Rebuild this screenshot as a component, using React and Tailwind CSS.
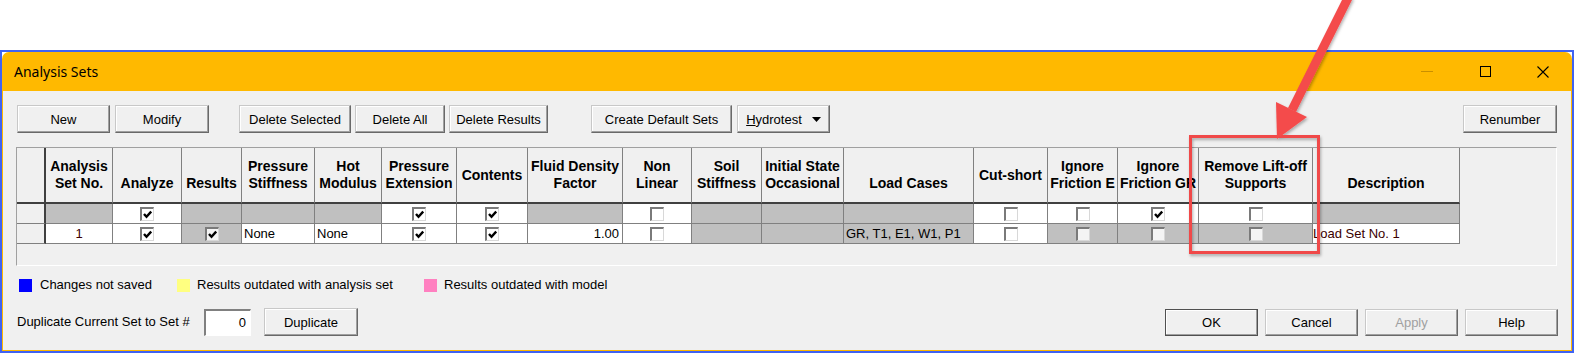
import React from 'react';

const BG = { g: 'bg-[#c0c0c0]', w: 'bg-white', h: 'bg-[#f0f0f0]' };

const COLS = [
  ['', ''],
  ['Analysis', 'Set No.'],
  ['', 'Analyze'],
  ['', 'Results'],
  ['Pressure', 'Stiffness'],
  ['Hot', 'Modulus'],
  ['Pressure', 'Extension'],
  ['Contents'],
  ['Fluid Density', 'Factor'],
  ['Non', 'Linear'],
  ['Soil', 'Stiffness'],
  ['Initial State', 'Occasional'],
  ['', 'Load Cases'],
  ['Cut-short'],
  ['Ignore', 'Friction E'],
  ['Ignore', 'Friction GR'],
  ['Remove Lift-off', 'Supports'],
  ['', 'Description'],
];

// bg, checkbox (true/false/undefined), text, align
const ROWS = [
  [
    { bg: 'h' }, { bg: 'g' }, { bg: 'w', cb: true }, { bg: 'g' }, { bg: 'g' }, { bg: 'g' },
    { bg: 'w', cb: true }, { bg: 'w', cb: true }, { bg: 'g' }, { bg: 'w', cb: false },
    { bg: 'g' }, { bg: 'g' }, { bg: 'g' }, { bg: 'w', cb: false }, { bg: 'w', cb: false },
    { bg: 'w', cb: true }, { bg: 'w', cb: false }, { bg: 'g' },
  ],
  [
    { bg: 'h' }, { bg: 'w', text: '1', al: 'c', red: true }, { bg: 'w', cb: true }, { bg: 'g', cb: true },
    { bg: 'w', text: 'None' }, { bg: 'w', text: 'None' }, { bg: 'w', cb: true }, { bg: 'w', cb: true },
    { bg: 'w', text: '1.00', al: 'r' }, { bg: 'w', cb: false }, { bg: 'g' }, { bg: 'g' },
    { bg: 'g', text: 'GR, T1, E1, W1, P1' }, { bg: 'w', cb: false }, { bg: 'g', cb: false },
    { bg: 'g', cb: false }, { bg: 'g', cb: false }, { bg: 'w', text: 'Load Set No. 1', red: true, tight: true },
  ],
];

const Check = () => (
  <svg width="9" height="9" viewBox="0 0 9 9" className="block">
    <path d="M1 4 L3.5 6.8 L8.2 1.5" fill="none" stroke="#000" strokeWidth="2.4" />
  </svg>
);

const Box = ({ on, dim }) => (
  <span
    className={`flex h-[14px] w-[14px] items-center justify-center border-t-2 border-l-2 border-t-[#7a7a7a] border-l-[#7a7a7a] border-b border-r border-b-[#d8d8d8] border-r-[#d8d8d8] ${dim ? 'bg-[#f4f4f4]' : 'bg-white'}`}
  >
    {on && <Check />}
  </span>
);

const Btn = ({ children, className = '', muted, def }) => (
  <button
    className={`flex items-center justify-center border bg-[#f0f0f0] text-[13px] leading-none shadow-[inset_-1px_-1px_0_#a0a0a0,inset_1px_1px_0_#ffffff] ${def ? 'border-[#505050]' : 'border-[#c8c8c8] border-r-[#696969] border-b-[#696969]'} ${muted ? 'text-[#a0a0a0]' : 'text-black'} ${className}`}
  >
    {children}
  </button>
);

export default function App() {
  return (
    <div className="relative h-[353px] w-[1574px] overflow-hidden bg-white font-['Liberation_Sans',Arial,sans-serif] text-black">
      <div className="pt-[50px]">
        <div className="h-[303px] w-[1574px] border-2 border-[#4063f2] bg-white">
          <div className="overflow-hidden rounded-t-[7px]">
            {/* title bar */}
            <div className="flex h-[39px] items-center bg-[#ffb900]">
              <span className="pl-[12px] font-['Noto_Sans',sans-serif] text-[14px]">Analysis Sets</span>
              <div className="ml-auto flex h-full">
                <div className="flex w-[58px] items-center justify-center">
                  <span className="block h-px w-[12px] bg-[#c98f00]" />
                </div>
                <div className="flex w-[58px] items-center justify-center">
                  <span className="block h-[11px] w-[11px] border border-black" />
                </div>
                <div className="flex w-[58px] items-center justify-center">
                  <svg width="12" height="12" viewBox="0 0 12 12">
                    <path d="M0.5 0.5 L11.5 11.5 M11.5 0.5 L0.5 11.5" stroke="#000" strokeWidth="1.1" />
                  </svg>
                </div>
              </div>
            </div>

            {/* body */}
            <div className="flex h-[260px] flex-col border-x border-b border-[#ffb900] bg-[#f0f0f0] px-[14px]">
              <div className="mt-[14px] flex h-[28px]">
                <Btn className="w-[93px]">New</Btn>
                <Btn className="ml-[5px] w-[94px]">Modify</Btn>
                <Btn className="ml-[30px] w-[112px]">Delete Selected</Btn>
                <Btn className="ml-[4px] w-[90px]">Delete All</Btn>
                <Btn className="ml-[4px] w-[99px]">Delete Results</Btn>
                <Btn className="ml-[43px] w-[141px]">Create Default Sets</Btn>
                <Btn className="ml-[5px] w-[93px] gap-[10px]">
                  <span><span className="underline">H</span>ydrotest</span>
                  <svg width="9" height="5" viewBox="0 0 9 5"><path d="M0 0 H9 L4.5 5 Z" fill="#000" /></svg>
                </Btn>
                <Btn className="ml-auto w-[94px]">Renumber</Btn>
              </div>

              {/* grid */}
              <div className="ml-[-1px] mt-[14px] h-[119px] w-[1541px] border border-[#a0a0a0] border-b-white border-r-white bg-[#f0f0f0]">
                <div className="grid w-[1443px] grid-cols-[29px_67px_69px_60px_73px_67px_75px_71px_95px_69px_70px_82px_130px_74px_70px_81px_114px_147px]">
                  {COLS.map((h, i) => (
                    <div
                      key={'h' + i}
                      className={`flex h-[56px] flex-col items-center justify-center border-b-2 border-b-[#404040] bg-[#f0f0f0] text-center text-[14px] font-bold leading-[17px] ${i === 0 ? 'border-r-2 border-r-[#404040]' : 'border-r border-r-[#808080]'}`}
                    >
                      {h.map((l, j) => (
                        <span key={j} className="whitespace-nowrap">{l || '\u00a0'}</span>
                      ))}
                    </div>
                  ))}
                  {ROWS.map((row, r) =>
                    row.map((c, i) => (
                      <div
                        key={r + '-' + i}
                        className={`flex h-[20px] items-center overflow-hidden whitespace-nowrap border-b border-b-[#808080] text-[13px] ${BG[c.bg]} ${i === 0 ? 'border-r-2 border-r-[#404040] border-b-[#404040]' : 'border-r border-r-[#808080]'} ${c.cb !== undefined || c.al === 'c' ? 'justify-center' : c.al === 'r' ? 'justify-end pr-[3px]' : c.tight ? 'pl-0' : 'pl-[2px]'} ${c.red ? 'text-[#3a0000]' : ''}`}
                      >
                        {c.cb !== undefined && <Box on={c.cb} dim={c.bg === 'g'} />}
                        {c.text}
                      </div>
                    ))
                  )}
                </div>
              </div>

              {/* legend */}
              <div className="mt-[11px] flex h-[16px] items-center text-[13px]">
                <div className="flex w-[160px] items-center gap-[8px] pl-[2px]">
                  <span className="block h-[13px] w-[13px] bg-[#0000ff]" />
                  <span>Changes not saved</span>
                </div>
                <div className="flex w-[247px] items-center gap-[7px]">
                  <span className="block h-[13px] w-[13px] bg-[#ffff80]" />
                  <span>Results outdated with analysis set</span>
                </div>
                <div className="flex items-center gap-[7px]">
                  <span className="block h-[13px] w-[13px] bg-[#ff80c0]" />
                  <span>Results outdated with model</span>
                </div>
              </div>

              {/* duplicate + dialog buttons */}
              <div className="mt-[15px] flex h-[28px] items-center text-[13px]">
                <span className="w-[187px]">Duplicate Current Set to Set #</span>
                <div className="flex h-[27px] w-[47px] items-center justify-end border-t-2 border-l-2 border-t-[#808080] border-l-[#808080] border-b border-r border-b-white border-r-white bg-white pr-[4px]">
                  0
                </div>
                <Btn className="ml-[13px] h-[28px] w-[94px]">Duplicate</Btn>
                <div className="ml-auto mr-[-1px] flex h-[27px] gap-[7px]">
                  <Btn def className="w-[93px]">OK</Btn>
                  <Btn className="w-[93px]">Cancel</Btn>
                  <Btn muted className="w-[93px]">Apply</Btn>
                  <Btn className="w-[93px]">Help</Btn>
                </div>
              </div>
            </div>
          </div>
        </div>
      </div>

      {/* annotation: arrow and highlight box */}
      <svg className="pointer-events-none absolute left-0 top-0" width="1574" height="353" viewBox="0 0 1574 353">
        <defs>
          <filter id="sh" x="-20%" y="-20%" width="140%" height="140%">
            <feDropShadow dx="1" dy="2" stdDeviation="1.5" floodColor="#000" floodOpacity="0.3" />
          </filter>
        </defs>
        <g filter="url(#sh)">
          <rect x="1190.5" y="136.5" width="128" height="116" fill="none" stroke="#f04a4a" strokeWidth="3" />
          <line x1="1349" y1="-4" x2="1292" y2="110" stroke="#f44b4b" strokeWidth="9" />
          <polygon points="1277,139 1276,102 1307,117" fill="#f44b4b" />
        </g>
      </svg>
    </div>
  );
}
